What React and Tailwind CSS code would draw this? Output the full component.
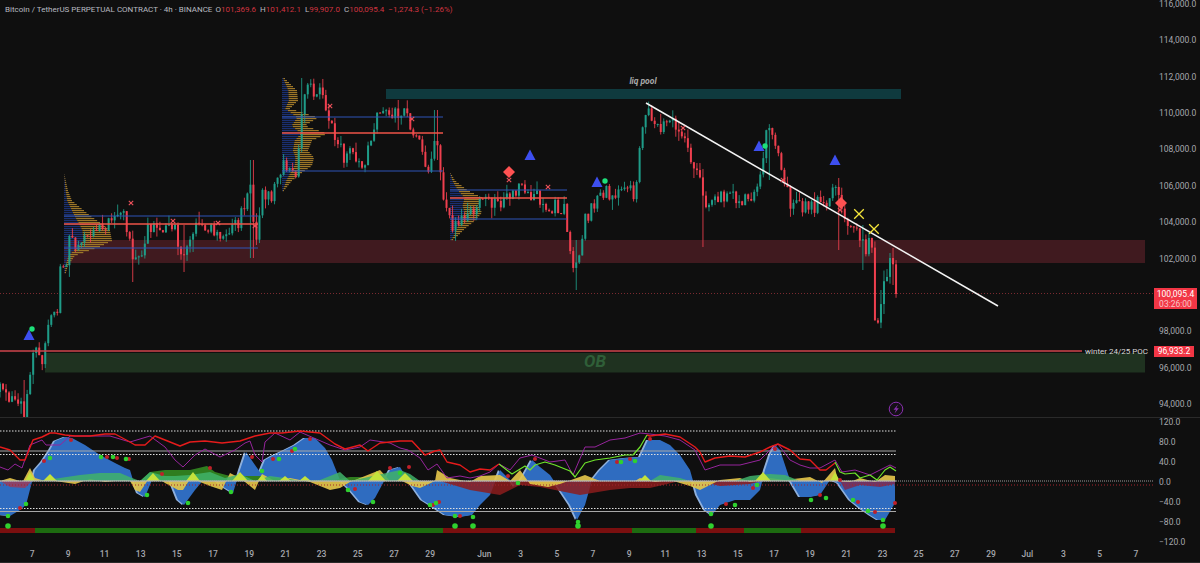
import React from "react";

// price path traced from the chart, [x, y] in pixels
const PRICE_PATH = [
  [0, 392], [10, 400], [20, 408], [24, 412], [28, 385], [32, 355], [36, 350], [44, 360], [50, 310], [58, 305], [60, 275], [65, 265],
  [70, 240], [80, 245], [90, 235], [100, 220], [105, 225], [115, 215], [125, 220], [133, 263], [140, 255], [146, 235], [155, 222], [165, 225],
  [175, 230], [180, 260], [186, 260], [190, 240], [195, 228], [205, 222], [215, 235], [225, 238], [235, 225], [240, 222], [245, 200], [250, 185],
  [255, 240], [258, 240], [260, 205], [265, 190], [270, 200], [280, 175], [285, 160], [295, 175], [300, 130], [303, 90], [310, 90], [315, 88],
  [322, 90], [330, 120], [335, 135], [340, 150], [345, 160], [350, 150], [358, 160], [365, 160], [372, 130], [380, 115], [390, 120], [400, 110],
  [405, 105], [412, 130], [420, 135], [425, 165], [430, 170], [436, 140], [442, 190], [448, 220], [455, 225], [470, 215], [480, 205], [490, 200],
  [500, 205], [510, 195], [520, 190], [530, 195], [540, 200], [550, 205], [565, 210], [569, 240], [573, 270], [577, 265], [585, 220], [592, 205],
  [600, 195], [610, 192], [620, 195], [630, 190], [635, 195], [640, 150], [645, 115], [650, 110], [655, 125], [660, 125], [670, 115], [680, 130],
  [690, 155], [697, 170], [703, 200], [710, 210], [720, 195], [730, 195], [740, 205], [750, 195], [760, 180], [765, 140], [770, 135], [780, 165],
  [790, 200], [800, 205], [810, 205], [820, 205], [830, 205], [835, 180], [838, 185], [845, 225], [855, 220], [860, 240], [865, 250], [872, 240],
  [875, 315], [880, 320], [885, 275], [890, 262], [893, 270], [896, 294],
];

// extra long wicks, candle x -> [top, bottom]
const WICKS = [
  [134, 240, 282], [185, 225, 272], [252, 160, 258], [303, 78, 110], [436, 110, 160], [575, 240, 290], [702, 190, 247], [768, 133, 180],
  [840, 178, 250], [862, 225, 270], [880, 290, 328], [892, 248, 285], [24, 380, 417], [398, 100, 130],
];

const PROFILES = [
  { x: 64, blue: 0.4, edge: [[172, 64], [190, 68], [200, 72], [215, 90], [222, 100], [230, 110], [240, 112], [246, 100], [255, 75], [265, 68], [272, 66]] },
  { x: 282, blue: 0.42, edge: [[78, 285], [90, 297], [100, 298], [108, 290], [117, 318], [125, 305], [133, 327], [140, 312], [150, 308], [157, 314], [165, 312], [172, 302], [180, 292], [190, 284]] },
  { x: 450, blue: 0.45, edge: [[173, 451], [180, 455], [190, 468], [197, 482], [205, 478], [212, 482], [220, 475], [228, 465], [235, 458], [240, 452]] },
];

const PROFILE_LINES = [
  { x1: 64, x2: 258, val: 216, poc: 224, low: 248 },
  { x1: 282, x2: 443, val: 117, poc: 133, low: 171 },
  { x1: 450, x2: 567, val: 190, poc: 198, low: 219 },
];

const TRIANGLES = [[29, 335], [530, 155], [597, 182], [759, 146], [835, 160]];
const GREEN_MARKS = [[32, 329], [605, 181], [765, 146]];
const DIAMONDS = [[509, 172], [841, 203]];
const RED_CROSSES = [[131, 203], [173, 221], [218, 223], [255, 226], [330, 106], [412, 119], [509, 180], [548, 187], [683, 128], [783, 180], [840, 210]];
const YELLOW_CROSSES = [[859, 214], [874, 229]];

const PRICE_LABELS = ["116,000.0", "114,000.0", "112,000.0", "110,000.0", "108,000.0", "106,000.0", "104,000.0", "102,000.0", "", "98,000.0", "96,000.0", "94,000.0"];
const OSC_LABELS = ["120.0", "80.0", "40.0", "0.0", "−40.0", "−80.0", "−120.0"];
const TIME_LABELS = ["7", "9", "11", "13", "15", "17", "19", "21", "23", "25", "27", "29"];
const TIME_LABELS_JUN = ["Jun", "3", "5", "7", "9", "11", "13", "15", "17", "19", "21", "23", "25", "27", "29", "Jul", "3", "5", "7"];

const RED_LINE = [
  [0, 447], [10, 450], [20, 460], [25, 460], [33, 440], [42, 437], [50, 433], [55, 433], [65, 435], [75, 436], [90, 436], [105, 434], [115, 434], [130, 442], [135, 445],
  [145, 445], [155, 436], [165, 440], [180, 446], [190, 442], [205, 441], [222, 443], [240, 441], [255, 436], [270, 433], [282, 433], [300, 431], [320, 433], [335, 444],
  [345, 449], [360, 445], [368, 451], [380, 443], [390, 442], [400, 441], [412, 441], [425, 455], [435, 451], [440, 450], [447, 462], [460, 465], [470, 472], [480, 469],
  [490, 470], [499, 464],
];
const RED_LINE_2 = [
  [647, 435], [650, 436], [665, 434], [680, 437], [695, 447], [700, 452], [705, 462], [715, 458], [730, 456], [745, 457], [760, 452], [770, 447], [778, 444], [790, 450],
  [800, 459], [810, 460], [820, 470], [826, 470], [835, 463],
];
const LIME_LINE = [
  [499, 464], [512, 474], [525, 466], [530, 470], [535, 465], [545, 462], [555, 465], [570, 471], [575, 477], [585, 463], [595, 460], [610, 458], [625, 455], [633, 455],
  [640, 447], [647, 435],
];
const LIME_LINE_2 = [[835, 462], [840, 472], [845, 474], [855, 473], [860, 478], [870, 475], [877, 480], [885, 470], [890, 467], [896, 471]];
const PURPLE_LINE = [
  [0, 467], [8, 470], [15, 464], [22, 468], [30, 445], [42, 440], [46, 445], [60, 445], [70, 436], [90, 436], [110, 436], [130, 442], [150, 436], [165, 447], [175, 460],
  [183, 467], [195, 455], [205, 449], [220, 457], [235, 450], [245, 443], [250, 441], [255, 455], [262, 462], [265, 442], [275, 433], [290, 440], [300, 432], [330, 445],
  [345, 450], [360, 447], [370, 440], [390, 443], [400, 448], [408, 450], [420, 458], [428, 470], [437, 464], [447, 478], [460, 476], [470, 478], [480, 476], [490, 472],
  [499, 464], [510, 470], [520, 458], [532, 455], [550, 462], [565, 460], [573, 475], [585, 447], [595, 447], [610, 440], [625, 438], [640, 433], [650, 434], [665, 436],
  [680, 440], [695, 450], [705, 470], [720, 465], [740, 465], [760, 460], [770, 450], [778, 444], [790, 460], [800, 465], [810, 468], [820, 468], [835, 460], [842, 472],
  [855, 470], [870, 475], [880, 470], [890, 465], [896, 468],
];
const BLUE_AREA = [
  [0, 515], [10, 516], [20, 510], [26, 505], [33, 478], [35, 470], [42, 462], [50, 450], [55, 441], [65, 437], [72, 438], [85, 445], [100, 455], [115, 463], [125, 468],
  [130, 470], [133, 480], [138, 493], [145, 497], [152, 480], [157, 475], [170, 480], [178, 500], [184, 505], [195, 490], [205, 478], [215, 480], [225, 488], [233, 493],
  [240, 470], [246, 452], [255, 465], [260, 472], [265, 460], [272, 456], [285, 450], [295, 445], [305, 438], [315, 438], [325, 448], [332, 460], [340, 480], [350, 490],
  [360, 502], [368, 505], [375, 498], [382, 485], [390, 470], [400, 467], [408, 480], [415, 490], [422, 500], [430, 505], [445, 515], [460, 517], [472, 515], [480, 505],
  [490, 495], [500, 470], [510, 480], [515, 487], [522, 478], [532, 460], [540, 467], [550, 475], [560, 490], [570, 505], [577, 520], [585, 505], [592, 480], [600, 470],
  [610, 460], [625, 458], [640, 457], [648, 440], [660, 440], [670, 445], [680, 455], [690, 470], [697, 495], [705, 510], [712, 515], [720, 505], [735, 500], [750, 500],
  [760, 490], [765, 470], [770, 455], [775, 445], [780, 450], [790, 480], [800, 497], [810, 497], [820, 495], [830, 480], [838, 483], [850, 500], [860, 508], [870, 515],
  [878, 520], [885, 520], [895, 503],
];
const YELLOW_AREA = [
  [0, 481], [10, 478], [20, 481], [23, 481], [30, 468], [35, 478], [45, 481], [50, 478], [55, 481], [75, 484], [90, 479], [105, 482], [125, 480], [130, 481], [135, 490],
  [140, 492], [148, 480], [155, 476], [165, 483], [178, 490], [183, 490], [192, 476], [200, 482], [210, 486], [222, 490], [230, 473], [240, 478], [255, 490], [262, 474],
  [275, 481], [290, 478], [310, 482], [330, 490], [340, 488], [350, 482], [370, 474], [380, 470], [390, 481], [400, 480], [412, 486], [420, 488], [435, 481], [437, 470],
  [450, 478], [470, 482], [480, 476], [500, 475], [510, 481], [520, 470], [530, 484], [548, 487], [560, 484], [585, 475], [600, 481], [625, 481], [635, 481], [640, 478],
  [655, 482], [670, 480], [690, 486], [700, 490], [720, 480], [740, 478], [750, 482], [760, 480], [770, 478], [785, 480], [810, 477], [822, 483], [835, 468], [838, 481],
  [850, 482], [860, 478], [875, 482], [885, 475], [895, 476],
];
const GREEN_AREA = [
  [37, 481], [60, 478], [80, 475], [100, 473], [120, 473], [132, 478], [140, 481], [150, 472], [165, 476], [175, 476], [190, 475], [210, 472], [225, 478], [240, 474], [255, 481],
  [270, 476], [285, 478], [300, 481], [320, 480], [340, 472], [350, 481],
  [400, 470], [410, 474], [420, 481], [560, 481], [650, 481], [660, 475], [680, 478], [690, 481], [735, 481], [750, 476], [770, 474], [785, 475], [800, 481],
];
const DARK_GREEN_AREA = [[140, 481], [150, 472], [165, 470], [190, 470], [207, 466], [215, 472], [230, 476], [260, 476], [300, 481], [330, 481], [350, 477], [375, 477], [390, 481]];
const DARK_RED_AREA = [
  [440, 481], [470, 490], [500, 495], [520, 485], [540, 487], [555, 490], [580, 495], [610, 490], [630, 488], [650, 488], [680, 481], [700, 481], [720, 486], [750, 484], [762, 481],
];
const END_RED_AREA = [[840, 481], [845, 490], [860, 485], [880, 487], [895, 484]];
// spots where the yellow and green layers overlap, [x, half width, top]
const LIME_PEAKS = [
  [30, 5, 472], [50, 7, 474], [153, 7, 473], [193, 7, 472], [240, 8, 472], [262, 5, 475], [285, 6, 476], [305, 6, 476], [377, 9, 471], [405, 8, 473], [645, 6, 475], [763, 8, 472], [835, 5, 472],
];

const OSC_GREEN = [
  [8, 516], [26, 504], [50, 458], [101, 457], [113, 457], [126, 459], [147, 495], [188, 503], [231, 492], [262, 471], [279, 459], [295, 449], [348, 490], [373, 502], [400, 473],
  [430, 505], [436, 503], [455, 516], [473, 517], [518, 483], [578, 522], [621, 462], [635, 461], [711, 514], [735, 505], [757, 485], [811, 500], [826, 498], [853, 500], [868, 511], [883, 520],
];
const OSC_RED = [
  [20, 508], [44, 461], [71, 440], [107, 457], [117, 458], [129, 459], [162, 474], [210, 468], [252, 457], [273, 459], [292, 451], [310, 439], [355, 489], [390, 468], [409, 467],
  [433, 505], [439, 502], [460, 516], [508, 476], [535, 459], [617, 462], [630, 459], [650, 439], [726, 504], [753, 488], [775, 449], [820, 495], [840, 480], [858, 502], [875, 512], [895, 503],
];
const OSC_BIG = [[8, 526], [455, 526], [473, 526], [578, 526], [711, 526], [883, 526]];
const TREND_BAR = [
  [0, 35, "#7a0f0f"], [35, 443, "#1d6b10"], [443, 632, "#7a0f0f"], [632, 696, "#1d6b10"], [696, 744, "#7a0f0f"], [744, 801, "#1d6b10"], [801, 895, "#7a0f0f"],
];

function interp(points, x) {
  if (x <= points[0][0]) return points[0][1];
  for (let i = 1; i < points.length; i++) {
    if (x <= points[i][0]) {
      const [x0, y0] = points[i - 1];
      const [x1, y1] = points[i];
      return y0 + ((y1 - y0) * (x - x0)) / (x1 - x0);
    }
  }
  return points[points.length - 1][1];
}

function makeCandles() {
  let seed = 1234;
  const rand = () => {
    seed = (seed * 16807) % 2147483647;
    return seed / 2147483647;
  };
  const out = [];
  let prev = PRICE_PATH[0][1];
  for (let i = 0; i <= 297; i++) {
    const x = 3.017 * i;
    const noise = (rand() - 0.5) * 17;
    const close = i === 297 ? 294 : interp(PRICE_PATH, x) + noise;
    const open = prev;
    let top = Math.min(open, close) - rand() * rand() * 13;
    let bottom = Math.max(open, close) + rand() * rand() * 13;
    const wick = WICKS.find((w) => Math.abs(w[0] - x) < 1.6);
    if (wick) {
      top = Math.min(top, wick[1]);
      bottom = Math.max(bottom, wick[2]);
    }
    out.push({ x, open, close, top, bottom });
    prev = close;
  }
  return out;
}

function linePath(points) {
  return points.map((p, i) => `${i ? "L" : "M"}${p[0]} ${p[1]}`).join(" ");
}

function areaPath(points, base = 481) {
  const first = points[0][0];
  const last = points[points.length - 1][0];
  return `M${first} ${base} ${points.map((p) => `L${p[0]} ${p[1]}`).join(" ")} L${last} ${base} Z`;
}

function Cross({ x, y, size, color, width }) {
  return (
    <path d={`M${x - size} ${y - size} L${x + size} ${y + size} M${x + size} ${y - size} L${x - size} ${y + size}`} stroke={color} strokeWidth={width} fill="none" />
  );
}

function VolumeProfile({ profile }) {
  const rows = [];
  const top = profile.edge[0][0];
  const bottom = profile.edge[profile.edge.length - 1][0];
  for (let y = top; y <= bottom; y += 2) {
    const right = interp(profile.edge, y);
    const split = profile.x + (right - profile.x) * profile.blue;
    rows.push(
      <g key={y}>
        <rect x={profile.x} y={y} width={split - profile.x} height="1.2" fill="#1a2f70" />
        <rect x={split} y={y} width={right - split} height="1.2" fill="#9c7628" />
      </g>
    );
  }
  return <g>{rows}</g>;
}

function PriceChart() {
  const candles = makeCandles();
  return (
    <svg viewBox="0 0 1153 417" className="w-full h-full block">
      <line x1="0" x2="1153" y1="293.5" y2="293.5" stroke="#7a2a30" strokeDasharray="1 2" />
      <rect x="386" y="89" width="515" height="10" fill="#0f3a3e" />
      <text x="643" y="84" textAnchor="middle" className="fill-[#a9a9a9] text-[8.5px] italic font-bold">liq pool</text>
      <rect x="64" y="240" width="1081" height="23" fill="#401a1f" />
      <rect x="45" y="353" width="1100" height="19.5" fill="#1f3220" />
      <text x="595" y="367" textAnchor="middle" className="fill-[#2f5f38] text-[17px] italic font-bold">OB</text>

      {PROFILES.map((p) => (
        <VolumeProfile key={p.x} profile={p} />
      ))}

      {candles.map((c) => {
        const up = c.close < c.open;
        const color = up ? "#1f9c88" : "#ee3f4e";
        return (
          <g key={c.x}>
            <line x1={c.x} x2={c.x} y1={c.top} y2={c.bottom} stroke={color} strokeOpacity="0.85" />
            <rect x={c.x - 1} y={Math.min(c.open, c.close)} width="2" height={Math.max(Math.abs(c.open - c.close), 1)} fill={color} />
          </g>
        );
      })}

      {PROFILE_LINES.map((l) => (
        <g key={l.x1}>
          <line x1={l.x1} x2={l.x2} y1={l.val} y2={l.val} stroke="#2f55b8" />
          <line x1={l.x1} x2={l.x2} y1={l.poc} y2={l.poc} stroke="#ef5548" strokeWidth="1.3" />
          <line x1={l.x1} x2={l.x2} y1={l.low} y2={l.low} stroke="#2f55b8" />
        </g>
      ))}

      <line x1="0" x2="1082" y1="351" y2="351" stroke="#cf444d" strokeWidth="1.5" />
      <line x1="646" y1="103" x2="998" y2="306" stroke="#f4f4f4" strokeWidth="1.5" />
      <text x="1085" y="354" className="fill-[#d8d8d8] text-[8px]">winter 24/25 POC</text>

      {TRIANGLES.map(([x, y]) => (
        <path key={x} d={`M${x} ${y - 5.5} L${x + 5.5} ${y + 5} L${x - 5.5} ${y + 5} Z`} fill="#3d4ff0" />
      ))}
      {GREEN_MARKS.map(([x, y]) => (
        <circle key={x} cx={x} cy={y} r="2.7" fill="#1de07a" />
      ))}
      {DIAMONDS.map(([x, y]) => (
        <path key={x} d={`M${x} ${y - 6} L${x + 6} ${y} L${x} ${y + 6} L${x - 6} ${y} Z`} fill="#ff5252" />
      ))}
      {RED_CROSSES.map(([x, y]) => (
        <Cross key={x} x={x} y={y} size={2.2} color="#f0525c" width={1.1} />
      ))}
      {YELLOW_CROSSES.map(([x, y]) => (
        <Cross key={x} x={x} y={y} size={4.8} color="#f5e63a" width={1.3} />
      ))}

      <circle cx="896" cy="409" r="6.8" fill="#141016" stroke="#8a2fb0" strokeWidth="1" />
      <path d="M898 404.5 L893.5 409.8 L896 409.8 L894.5 413.5 L898.8 408.2 L896.3 408.2 Z" fill="#8a2fb0" />
    </svg>
  );
}

function Oscillator() {
  const light = BLUE_AREA.map(([x, y]) => [x - 2, y]);
  return (
    <svg viewBox="0 418 1153 125" className="w-full h-full block">
      <path d={areaPath(light)} fill="#8fb0dc" />
      <path d={areaPath(BLUE_AREA)} fill="#2f6cc0" />
      <path d={areaPath(DARK_GREEN_AREA)} fill="#2f7d1f" />
      <path d={areaPath(DARK_RED_AREA)} fill="#8c1c1c" fillOpacity="0.85" />
      <path d={areaPath(END_RED_AREA)} fill="#8c1c3c" fillOpacity="0.7" />
      <path d={areaPath([[0, 481], [10, 487], [25, 488], [32, 481]])} fill="#a03a55" fillOpacity="0.8" />
      <path d={areaPath(YELLOW_AREA)} fill="#e3c44a" fillOpacity="0.92" />
      <path d={areaPath(GREEN_AREA)} fill="#3fb26a" fillOpacity="0.85" />
      {LIME_PEAKS.map(([x, half, top]) => (
        <path key={x} d={`M${x - half} 481 L${x} ${top} L${x + half} 481 Z`} fill="#c4e23c" />
      ))}

      <line x1="0" x2="1153" y1="481" y2="481" stroke="#9a9a9a" strokeDasharray="1 1" />
      <line x1="0" x2="896" y1="481" y2="481" stroke="#bdbdbd" strokeOpacity="0.7" strokeWidth="1.3" />
      <line x1="0" x2="1153" y1="485" y2="485" stroke="#a3242c" strokeDasharray="1 2" />

      <line x1="0" x2="896" y1="431" y2="431" stroke="#e0e0e0" strokeDasharray="1.5 1.5" />
      <line x1="0" x2="896" y1="454.5" y2="454.5" stroke="#e0e0e0" strokeDasharray="1.5 1.5" />
      <line x1="0" x2="896" y1="508.5" y2="508.5" stroke="#e0e0e0" strokeDasharray="1.5 1.5" />
      <line x1="0" x2="896" y1="451" y2="451" stroke="#a8a8a8" />
      <line x1="0" x2="896" y1="511.5" y2="511.5" stroke="#a8a8a8" />

      <path d={linePath(PURPLE_LINE)} stroke="#96249c" strokeWidth="1" fill="none" strokeLinejoin="round" />
      <path d={linePath(RED_LINE)} stroke="#e51b1b" strokeWidth="1.4" fill="none" strokeLinejoin="round" />
      <path d={linePath(RED_LINE_2)} stroke="#e51b1b" strokeWidth="1.4" fill="none" strokeLinejoin="round" />
      <path d={linePath(LIME_LINE)} stroke="#6fe52b" strokeWidth="1.2" fill="none" strokeLinejoin="round" />
      <path d={linePath(LIME_LINE_2)} stroke="#6fe52b" strokeWidth="1.2" fill="none" strokeLinejoin="round" />

      {TREND_BAR.map(([x1, x2, color]) => (
        <rect key={x1} x={x1} y="528" width={x2 - x1} height="5" fill={color} />
      ))}
      {OSC_RED.map(([x, y]) => (
        <circle key={x} cx={x} cy={y} r="2" fill="#c0202a" />
      ))}
      {OSC_GREEN.map(([x, y]) => (
        <circle key={x} cx={x} cy={y} r="2.3" fill="#2fd12f" />
      ))}
      {OSC_BIG.map(([x, y]) => (
        <circle key={x} cx={x} cy={y} r="2.8" fill="#2fd12f" />
      ))}
    </svg>
  );
}

export default function App() {
  return (
    <div className="w-[1200px] h-[563px] overflow-hidden flex flex-col bg-[#0f0f0f] text-[#a6a8ae] font-[family-name:Roboto,sans-serif]">
      <div className="flex h-[418px] shrink-0 border-b border-[#2a2a2a]">
        <div className="relative w-[1153px] shrink-0">
          <PriceChart />
          <div className="absolute left-[5px] top-[4px] flex gap-[4px] text-[8px] leading-3 whitespace-nowrap">
            <span className="text-[#b8bac0]">Bitcoin / TetherUS PERPETUAL CONTRACT · 4h · BINANCE</span>
            <span className="-ml-[1px] text-[#b8bac0]">O<span className="text-[#d03440]">101,369.6</span></span>
            <span className="text-[#b8bac0]">H<span className="text-[#d03440]">101,412.1</span></span>
            <span className="text-[#b8bac0]">L<span className="text-[#d03440]">99,907.0</span></span>
            <span className="text-[#b8bac0]">C<span className="text-[#d03440]">100,095.4</span></span>
            <span className="text-[#d03440]">−1,274.3 (−1.26%)</span>
          </div>
        </div>
        <div className="relative flex-1 overflow-hidden">
          <div className="flex flex-col -mt-[14px] pl-[6px] text-[8.5px]">
            {PRICE_LABELS.map((label, i) => (
              <div key={i} className="h-[36.4px] shrink-0 flex items-center">
                {label}
              </div>
            ))}
          </div>
          <div className="absolute left-[1px] top-[288px] w-[43px] h-[21px] bg-[#f23645] text-white text-[8.5px] leading-[10px] flex flex-col items-center justify-center">
            <span>100,095.4</span>
            <span className="text-[#f7c4c8]">03:26:00</span>
          </div>
          <div className="absolute left-[1px] top-[346px] w-[40px] h-[11px] bg-[#f23645] text-white text-[8.5px] leading-[11px] text-center">
            96,933.2
          </div>
        </div>
      </div>

      <div className="flex h-[125px] shrink-0">
        <div className="w-[1153px] shrink-0">
          <Oscillator />
        </div>
        <div className="flex-1 flex flex-col -mt-[6px] pl-[6px] text-[8.5px]">
          {OSC_LABELS.map((label) => (
            <div key={label} className="h-[20.1px] shrink-0 flex items-center">
              {label}
            </div>
          ))}
        </div>
      </div>

      <div className="flex-1 flex items-center pl-[14px] pt-[3px] text-[8.5px] font-medium border-b border-[#2a2a2a]">
        {TIME_LABELS.map((label, i) => (
          <span key={i} className="w-[36.2px] shrink-0 text-center">{label}</span>
        ))}
        <span className="w-[18.1px] shrink-0" />
        {TIME_LABELS_JUN.map((label, i) => (
          <span key={i} className="w-[36.2px] shrink-0 text-center">{label}</span>
        ))}
      </div>
    </div>
  );
}
